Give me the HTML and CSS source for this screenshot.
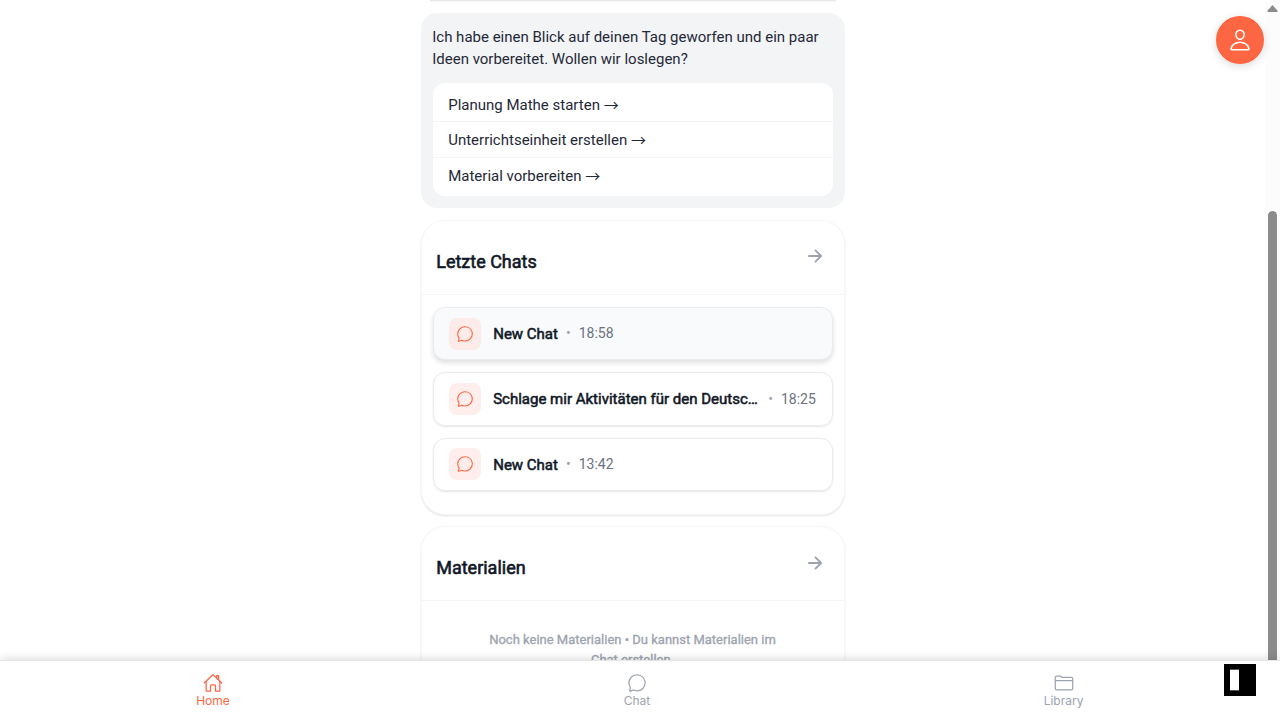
FILE: index.html
```html
<!DOCTYPE html>
<html lang="de">
<head>
<meta charset="utf-8">
<title>Home</title>
<link rel="stylesheet" href="styles.css">
</head>
<body>
<svg class="sprite" aria-hidden="true">
  <symbol id="chat" viewBox="0 0 512 512"><path d="M87.49 380c1.19-4.38-1.44-10.47-3.95-14.86a44.86 44.86 0 00-2.54-3.8 199.81 199.81 0 01-33-110C47.65 139.09 140.73 48 255.83 48 356.21 48 440 117.54 459.58 209.85a199 199 0 014.42 41.64c0 112.41-89.49 204.93-204.59 204.93-18.3 0-43-4.6-56.47-8.37s-26.92-8.77-30.39-10.11a31.09 31.09 0 00-11.12-2.07 30.71 30.71 0 00-12.09 2.43l-67.83 24.48a16 16 0 01-4.67 1.22 9.6 9.6 0 01-9.57-9.74 15.85 15.85 0 01.6-3.29z"/></symbol>
  <symbol id="arrow" viewBox="0 0 512 512"><path d="M268 112l144 144-144 144M392 256H100"/></symbol>
</svg>
<main class="content">
  <div class="column">
    <section class="previous"></section>
    <section class="assistant">
      <p class="message">Ich habe einen Blick auf deinen Tag geworfen und ein paar Ideen vorbereitet. Wollen wir loslegen?</p>
      <div class="options">
        <div class="option">Planung Mathe starten <span class="go">→</span></div>
        <div class="option">Unterrichtseinheit erstellen <span class="go">→</span></div>
        <div class="option">Material vorbereiten <span class="go">→</span></div>
      </div>
    </section>
    <section class="card">
      <header class="card-header"><h2>Letzte Chats</h2><svg class="icon arrow"><use href="#arrow"/></svg></header>
      <div class="chats">
        <div class="chat active"><span class="bubble"><svg class="icon"><use href="#chat"/></svg></span><span class="name">New Chat</span><span class="dot">•</span><span class="time">18:58</span></div>
        <div class="chat"><span class="bubble"><svg class="icon"><use href="#chat"/></svg></span><span class="name">Schlage mir Aktivitäten für den Deutschunterricht vor</span><span class="dot">•</span><span class="time">18:25</span></div>
        <div class="chat"><span class="bubble"><svg class="icon"><use href="#chat"/></svg></span><span class="name">New Chat</span><span class="dot">•</span><span class="time">13:42</span></div>
      </div>
    </section>
    <section class="card">
      <header class="card-header"><h2>Materialien</h2><svg class="icon arrow"><use href="#arrow"/></svg></header>
      <p class="empty">Noch keine Materialien • Du kannst Materialien im Chat erstellen.</p>
    </section>
  </div>
  <div class="scrollbar"><div class="up"></div><div class="thumb"></div></div>
</main>
<div class="avatar"><svg class="icon" viewBox="0 0 512 512"><path d="M344 144c-3.92 52.87-44 96-88 96s-84.15-43.12-88-96c-4-55 35-96 88-96s92 42 88 96z"/><path d="M256 304c-87 0-175.3 48-191.64 138.6C62.39 453.52 68.57 464 80 464h352c11.44 0 17.62-10.48 15.65-21.4C431.3 352 343 304 256 304z"/></svg></div>
<nav class="tabs">
  <div class="tab selected"><svg class="icon" viewBox="0 0 512 512"><path d="M80 212v236a16 16 0 0016 16h96V328a24 24 0 0124-24h80a24 24 0 0124 24v136h96a16 16 0 0016-16V212"/><path d="M480 256L266.89 52c-5-5.28-16.69-5.34-21.78 0L32 256M400 179V64h-48v69"/></svg><span>Home</span></div>
  <div class="tab"><svg class="icon"><use href="#chat"/></svg><span>Chat</span></div>
  <div class="tab"><svg class="icon" viewBox="0 0 512 512"><path d="M440 432H72a40 40 0 01-40-40V120a40 40 0 0140-40h75.89a40 40 0 0122.19 6.72l27.84 18.56a40 40 0 0022.19 6.72H440a40 40 0 0140 40v240a40 40 0 01-40 40zM32 192h448"/></svg><span>Library</span></div>
</nav>
<div class="badge"><div class="badge-bar"></div></div>
</body>
</html>
```
FILE: styles.css
```css
* { box-sizing: border-box; }
body { margin: 0; height: 720px; overflow: hidden; display: flex; flex-direction: column; background: #fff; font-family: Roboto, "Noto Sans CJK JP", sans-serif; color: #1f2937; }
p, h2 { margin: 0; }
.sprite { position: absolute; width: 0; height: 0; }
.icon { width: 20px; height: 20px; fill: none; stroke: currentColor; stroke-width: 32; stroke-linecap: round; stroke-linejoin: round; flex: none; }
.content { height: 660px; flex: none; display: flex; justify-content: center; overflow: hidden; padding-right: 15px; }
.column { width: 424px; flex: none; }
.previous { height: 1px; margin: 0 0 12px; }
.previous::after { content: ""; display: block; height: 1px; margin: 0 9px; background: #e8e8e8; box-shadow: 0 1px 2px rgba(0,0,0,.06); }
.assistant { height: 195px; padding: 12.8px 12px 12px; border-radius: 16px; background: #f3f4f6; font-size: 15px; line-height: 22.5px; }
.message { margin: 0 0 12px -.3px; }
.options { height: 113.5px; padding: 4px 0 3.6px; border-radius: 12px; background: #fff; }
.option { height: 35.5px; padding: 7px 15.7px 5px; border-bottom: 1px solid #f3f4f6; }
.option:last-child { border-bottom: 0; }
.go { display: inline-block; line-height: 0; transform: translateY(1px); }
.card { height: 295px; margin-top: 12.4px; border-radius: 24px; background: #fff; border: 1px solid #f8f8f9; box-shadow: 0 1px 2px rgba(0,0,0,.12); }
.card + .card { margin-top: 11.1px; }
.card-header { height: 73.8px; display: flex; justify-content: space-between; padding: 25px 18.9px 0 14.7px; border-bottom: 1px solid #f5f5f6; }
.card-header h2 { font-size: 18px; line-height: 31.6px; font-weight: 400; color: #111827; -webkit-text-stroke: .6px #111827; }
.arrow { color: #9ca3af; stroke-width: 48; }
.card + .card .arrow { margin-top: .3px; }
.chats { padding: 11.8px 11px; display: grid; grid-template-columns: minmax(0, 1fr); gap: 12.1px; }
.chat { height: 53.3px; padding: 0 15.7px; display: flex; align-items: center; border: 1px solid #e9ebee; border-radius: 12px; box-shadow: 0 1px 2px rgba(0,0,0,.1); }
.chat:last-child .name { padding-top: 1px; }
.chat.active { background: #f9fafb; box-shadow: 0 3px 5px rgba(0,0,0,.12); }
.bubble { flex: none; width: 32px; height: 32px; border-radius: 8px; margin-right: 12px; display: grid; place-items: center; color: #fd6642; background: #ffeeeb; }
.bubble .icon { width: 18px; height: 18px; }
.active .bubble { background: #fcebe8; }
.name { overflow: hidden; white-space: nowrap; text-overflow: ellipsis; font-size: 15px; line-height: 22px; color: #111827; -webkit-text-stroke: .55px #111827; }
.dot { margin: 0 8px; font-size: 14px; line-height: 20px; padding-bottom: .6px; color: #9ca3af; }
.time { padding-bottom: .6px; font-size: 14px; line-height: 20px; color: #6b7280; }
.empty { padding: 28.7px 60px; text-align: center; font-size: 13px; line-height: 20px; color: #9ca3af; -webkit-text-stroke: .3px #9ca3af; }
.scrollbar { position: absolute; right: 0; top: 0; width: 15px; height: 660px; background: #fcfcfc; }
.up { margin: 5px 2px 0; height: 7px; background: #8b8b8b; clip-path: polygon(50% 0, 100% 90%, 90% 100%, 10% 100%, 0 90%); }
.thumb { height: 470px; margin: 199px 3px 0; border-radius: 5px; background: #8b8b8b; }
.avatar { position: absolute; right: 16px; top: 16px; width: 48px; height: 48px; border-radius: 50%; display: grid; place-items: center; color: #fff; background: #fd6642; box-shadow: 0 2px 8px rgba(0,0,0,.15); }
.avatar .icon { width: 24px; height: 24px; }
.tabs { position: relative; height: 60px; flex: none; display: grid; grid-template-columns: 426px 422px 431px; background: #fff; border-top: 1px solid #e5e5e5; box-shadow: 0 -2px 8px rgba(0,0,0,.12); color: #9ca3af; font: 12px/14px Inter, sans-serif; }
.tab { display: flex; flex-direction: column; align-items: center; gap: 1px; padding-top: 12px; }
.selected { color: #fd6642; }
.badge { position: absolute; left: 1224px; top: 664px; width: 32px; height: 32px; padding: 5px 6px; background: #000; }
.badge-bar { width: 9px; height: 22px; background: #fff; border: solid #555; border-width: 1px 0; }
```
